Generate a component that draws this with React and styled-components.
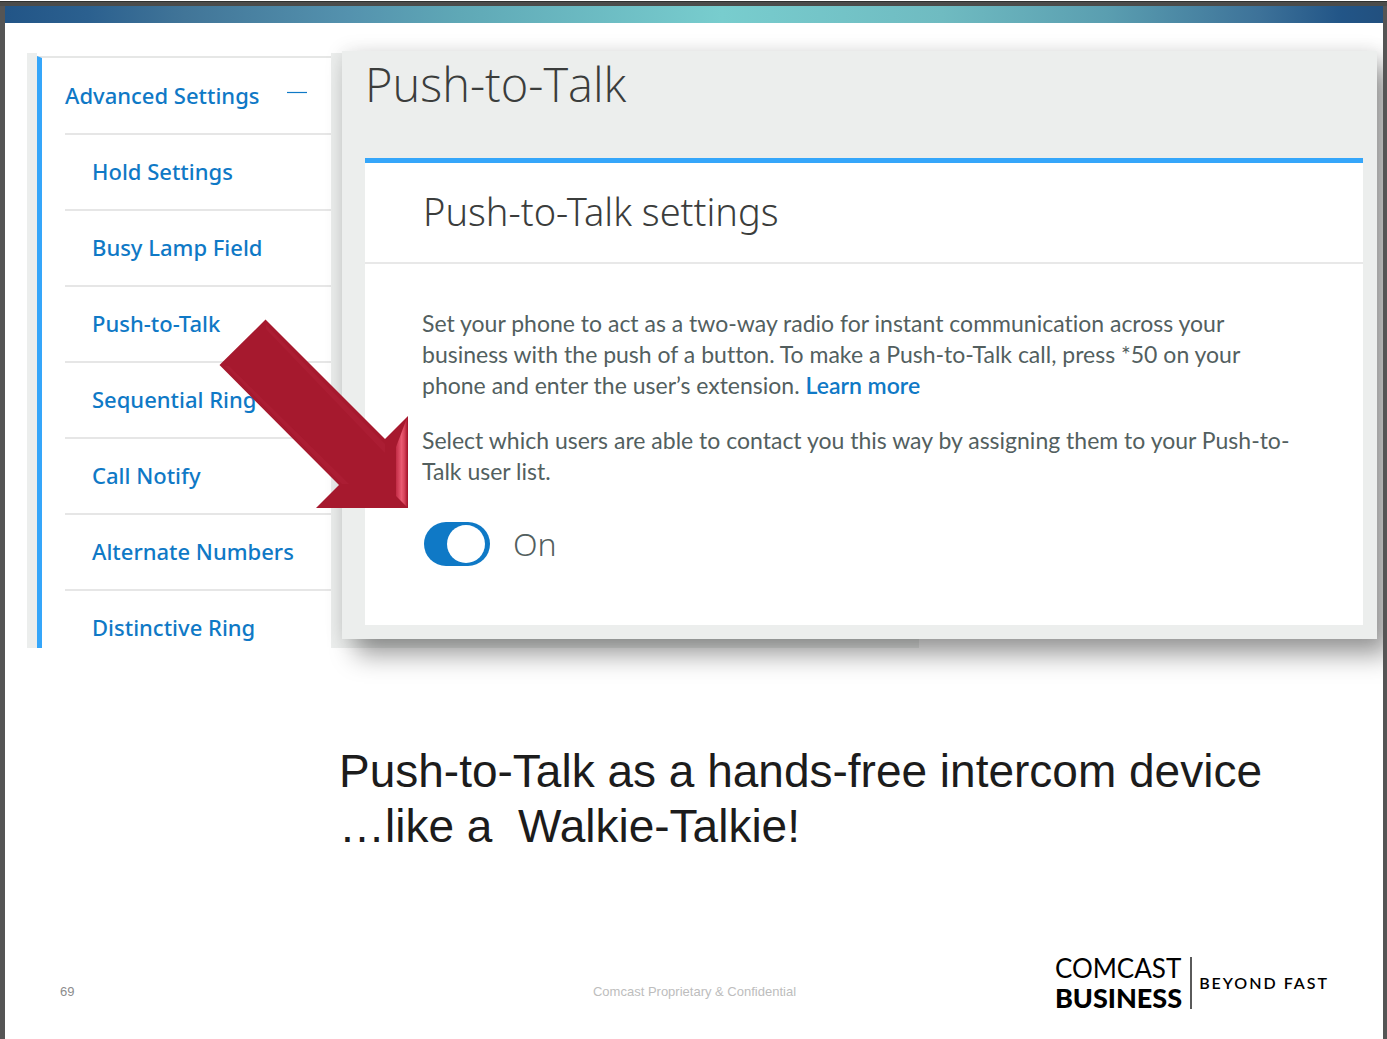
import styled, { createGlobalStyle } from "styled-components";

const GlobalStyle = createGlobalStyle`
  * {
    box-sizing: border-box;
  }
  body {
    margin: 0;
    background-color: white;
    font-family: "Noto Sans", sans-serif;
  }
`
const Viewer = styled.div`
  min-height: 100vh;
  display: flex;
  flex-direction: column;
  border-top: 1px solid white;
  background-color: #555555;
`
const ViewerEdge = styled.div`
  height: 5px;
  background-color: #4B4C4B;
  border-top: 1px solid #2F3130;
`
const Slide = styled.main`
  flex: 1;
  display: flex;
  flex-direction: column;
  margin: 0 4px 0 5px;
  background-color: white;
  overflow: hidden;
`
const Band = styled.div`
  height: 17px;
  background: linear-gradient(90deg, #225587 0%, #2B608F 6%, #417598 13%, #5492AE 25%, #5FA8B6 33%, #78CDCE 52%, #6FBBC1 68%, #5A9EB0 80%, #3D7299 91%, #225587 97%, #22507F 100%);
`
const Stage = styled.section`
  position: relative;
  display: grid;
  margin: 28px 6px 0 22px;
`
const MenuPanel = styled.nav`
  grid-area: 1 / 1;
  align-self: start;
  width: 892px;
  max-width: 100%;
  margin-top: 2px;
  padding-left: 10px;
  background-color: #ECEEED;
`
const MenuColumn = styled.div`
  width: 294px;
  padding-top: 3px;
  background-color: white;
`
const Menu = styled.ul`
  margin: 0;
  padding: 0 0 0 23px;
  list-style: none;
  border-top: 2px solid #E6E7E6;
  border-left: 5px solid #35A6FA;
`
const MenuItem = styled.li`
  padding: 21px 0 23px 27px;
  border-top: 2px solid #E6E6E6;
  &:last-child {
    padding-bottom: 6px;
  }
`
const MenuGroup = styled.li`
  padding: 22px 0 23px;
`
const MenuLink = styled.a`
  display: block;
  color: #0F79C6;
  font-size: 22px;
  font-weight: 500;
  line-height: 30px;
  text-decoration: none;
`
const GroupButton = styled.button`
  display: flex;
  gap: 28px;
  padding: 0;
  border: 0;
  background: none;
  color: #0F79C6;
  font-family: inherit;
  font-size: 22px;
  font-weight: 500;
  line-height: 30px;
`
const Minus = styled.svg`
  width: 20px;
  height: 20px;
`
const Card = styled.article`
  grid-area: 1 / 1;
  align-self: start;
  margin-left: 315px;
  padding: 0 14px 14px 23px;
  background-color: #ECEEED;
  box-shadow: 14px 16px 24px rgba(0, 0, 0, 0.38), 0 0 18px rgba(0, 0, 0, 0.1);
`
const CardTitle = styled.h1`
  margin: 0;
  padding: 1px 0 42px;
  color: #3B3D3C;
  font-family: "Open Sans", sans-serif;
  font-size: 47px;
  font-weight: 300;
  line-height: 64px;
`
const Panel = styled.div`
  background-color: white;
  border-top: 5px solid #35A6FA;
`
const PanelTitle = styled.h2`
  margin: 0;
  padding: 23px 58px 26px;
  border-bottom: 2px solid #E8E8E8;
  color: #3B3D3C;
  font-size: 38px;
  font-weight: 300;
  line-height: 50px;
`
const PanelBody = styled.div`
  display: flex;
  flex-direction: column;
  gap: 24px;
  padding: 44px 57px 59px;
`
const Text = styled.p`
  margin: 0;
  color: #535F5F;
  font-family: Lato, sans-serif;
  font-size: 23px;
  font-variant-ligatures: none;
  line-height: 31px;
`
const TextLink = styled.a`
  color: #0F79C6;
  font-weight: 600;
  text-decoration: none;
`
const SwitchLabel = styled.label`
  display: flex;
  align-items: center;
  gap: 23px;
  margin-top: 11px;
  color: #535F5F;
  font-size: 32px;
  font-weight: 300;
  line-height: 44px;
`
const Switch = styled.input`
  appearance: none;
  display: flex;
  justify-content: flex-start;
  width: 66px;
  height: 44px;
  margin: 0 0 0 2px;
  padding: 3px 5px;
  border-radius: 22px;
  background-color: #8A9494;
  &:checked {
    justify-content: flex-end;
    background-color: #0F79C6;
  }
  &::before {
    content: "";
    width: 38px;
    height: 38px;
    border-radius: 50%;
    background-color: white;
  }
`
// lies over both the menu and the card
const Arrow = styled.svg`
  position: absolute;
  left: 192px;
  top: 268px;
  width: 190px;
  height: 190px;
`
const Caption = styled.p`
  margin: 96px 40px 0 334px;
  color: #1C1C1C;
  font-family: "Liberation Sans", sans-serif;
  font-size: 46px;
  line-height: 55px;
  white-space: pre-line;
`
const Footer = styled.footer`
  display: grid;
  grid-template-columns: 1fr auto 1fr;
  align-items: center;
  margin-top: auto;
  padding: 40px 54px 30px 55px;
  font-family: "Liberation Sans", sans-serif;
  font-size: 13px;
  line-height: 20px;
`
const PageNumber = styled.span`
  padding-top: 18px;
  color: #8C8C8C;
`
const Notice = styled.span`
  padding-top: 18px;
  color: #BDBDBD;
`
const Logo = styled.div`
  justify-self: end;
  display: flex;
  align-items: center;
  color: black;
  font-family: Lato, sans-serif;
`
const LogoName = styled.div`
  display: flex;
  flex-direction: column;
  gap: 8px;
  padding-right: 8px;
  border-right: 2px solid #5A5A5A;
  line-height: 22px;
`
const LogoLine = styled.span`
  font-size: ${({ $bold }) => ($bold ? 27 : 26)}px;
  font-weight: ${({ $bold }) => ($bold ? 900 : 400)};
`
const Tagline = styled.span`
  padding-left: 7px;
  font-size: 16px;
  font-weight: 600;
  letter-spacing: 2px;
`

const menuItems = [
  'Hold Settings',
  'Busy Lamp Field',
  'Push-to-Talk',
  'Sequential Ring',
  'Call Notify',
  'Alternate Numbers',
  'Distinctive Ring',
];

function PointerArrow() {
  return (
    <Arrow viewBox="0 0 190 190" aria-hidden="true">
      <defs>
        <linearGradient id="bevel" x1="0" x2="1" y1="0" y2="0">
          <stop offset="0" stopColor="#C22B45" />
          <stop offset="0.5" stopColor="#EA5B72" />
          <stop offset="0.75" stopColor="#D8455C" />
          <stop offset="1" stopColor="#B01C34" />
        </linearGradient>
      </defs>
      <path d="M189 189V97L166 120L46.5 0.5L0.5 46L120 166L97 189Z" fill="#A6192E" />
      <path d="M47 6L166 125V134L47 10Z" fill="#AE2036" opacity="0.7" />
      <path d="M6 47H10L130 165H123Z" fill="#AE2036" opacity="0.7" />
      <path d="M177 128L188 99V188L177 177Z" fill="url(#bevel)" />
    </Arrow>
  );
}

function App() {
  return (
    <>
      <GlobalStyle />
      <Viewer>
        <ViewerEdge />
        <Slide>
          <Band />
          <Stage>
            <MenuPanel>
              <MenuColumn>
                <Menu>
                  <MenuGroup>
                    <GroupButton type="button" aria-expanded="true">
                      Advanced Settings
                      <Minus viewBox="0 0 20 20" aria-hidden="true">
                        <path d="M0 12.5H20" stroke="#0F79C6" strokeWidth="1.2" />
                      </Minus>
                    </GroupButton>
                  </MenuGroup>
                  {menuItems.map((item) => (
                    <MenuItem key={item}>
                      <MenuLink href="#">{item}</MenuLink>
                    </MenuItem>
                  ))}
                </Menu>
              </MenuColumn>
            </MenuPanel>
            <Card>
              <CardTitle>Push-to-Talk</CardTitle>
              <Panel>
                <PanelTitle>Push-to-Talk settings</PanelTitle>
                <PanelBody>
                  <Text>
                    Set your phone to act as a two-way radio for instant communication across your
                    business with the push of a button. To make a Push-to-Talk call, press *50 on your
                    phone and enter the user’s extension. <TextLink href="#">Learn more</TextLink>
                  </Text>
                  <Text>
                    Select which users are able to contact you this way by assigning them to your
                    Push-to-Talk user list.
                  </Text>
                  <SwitchLabel>
                    <Switch type="checkbox" role="switch" defaultChecked />
                    On
                  </SwitchLabel>
                </PanelBody>
              </Panel>
            </Card>
            <PointerArrow />
          </Stage>
          <Caption>{'Push-to-Talk as a hands-free intercom device\n…like a \u00a0Walkie-Talkie!'}</Caption>
          <Footer>
            <PageNumber>69</PageNumber>
            <Notice>Comcast Proprietary &amp; Confidential</Notice>
            <Logo>
              <LogoName>
                <LogoLine>COMCAST</LogoLine>
                <LogoLine $bold>BUSINESS</LogoLine>
              </LogoName>
              <Tagline>BEYOND FAST</Tagline>
            </Logo>
          </Footer>
        </Slide>
      </Viewer>
    </>
  );
}

export default App;
